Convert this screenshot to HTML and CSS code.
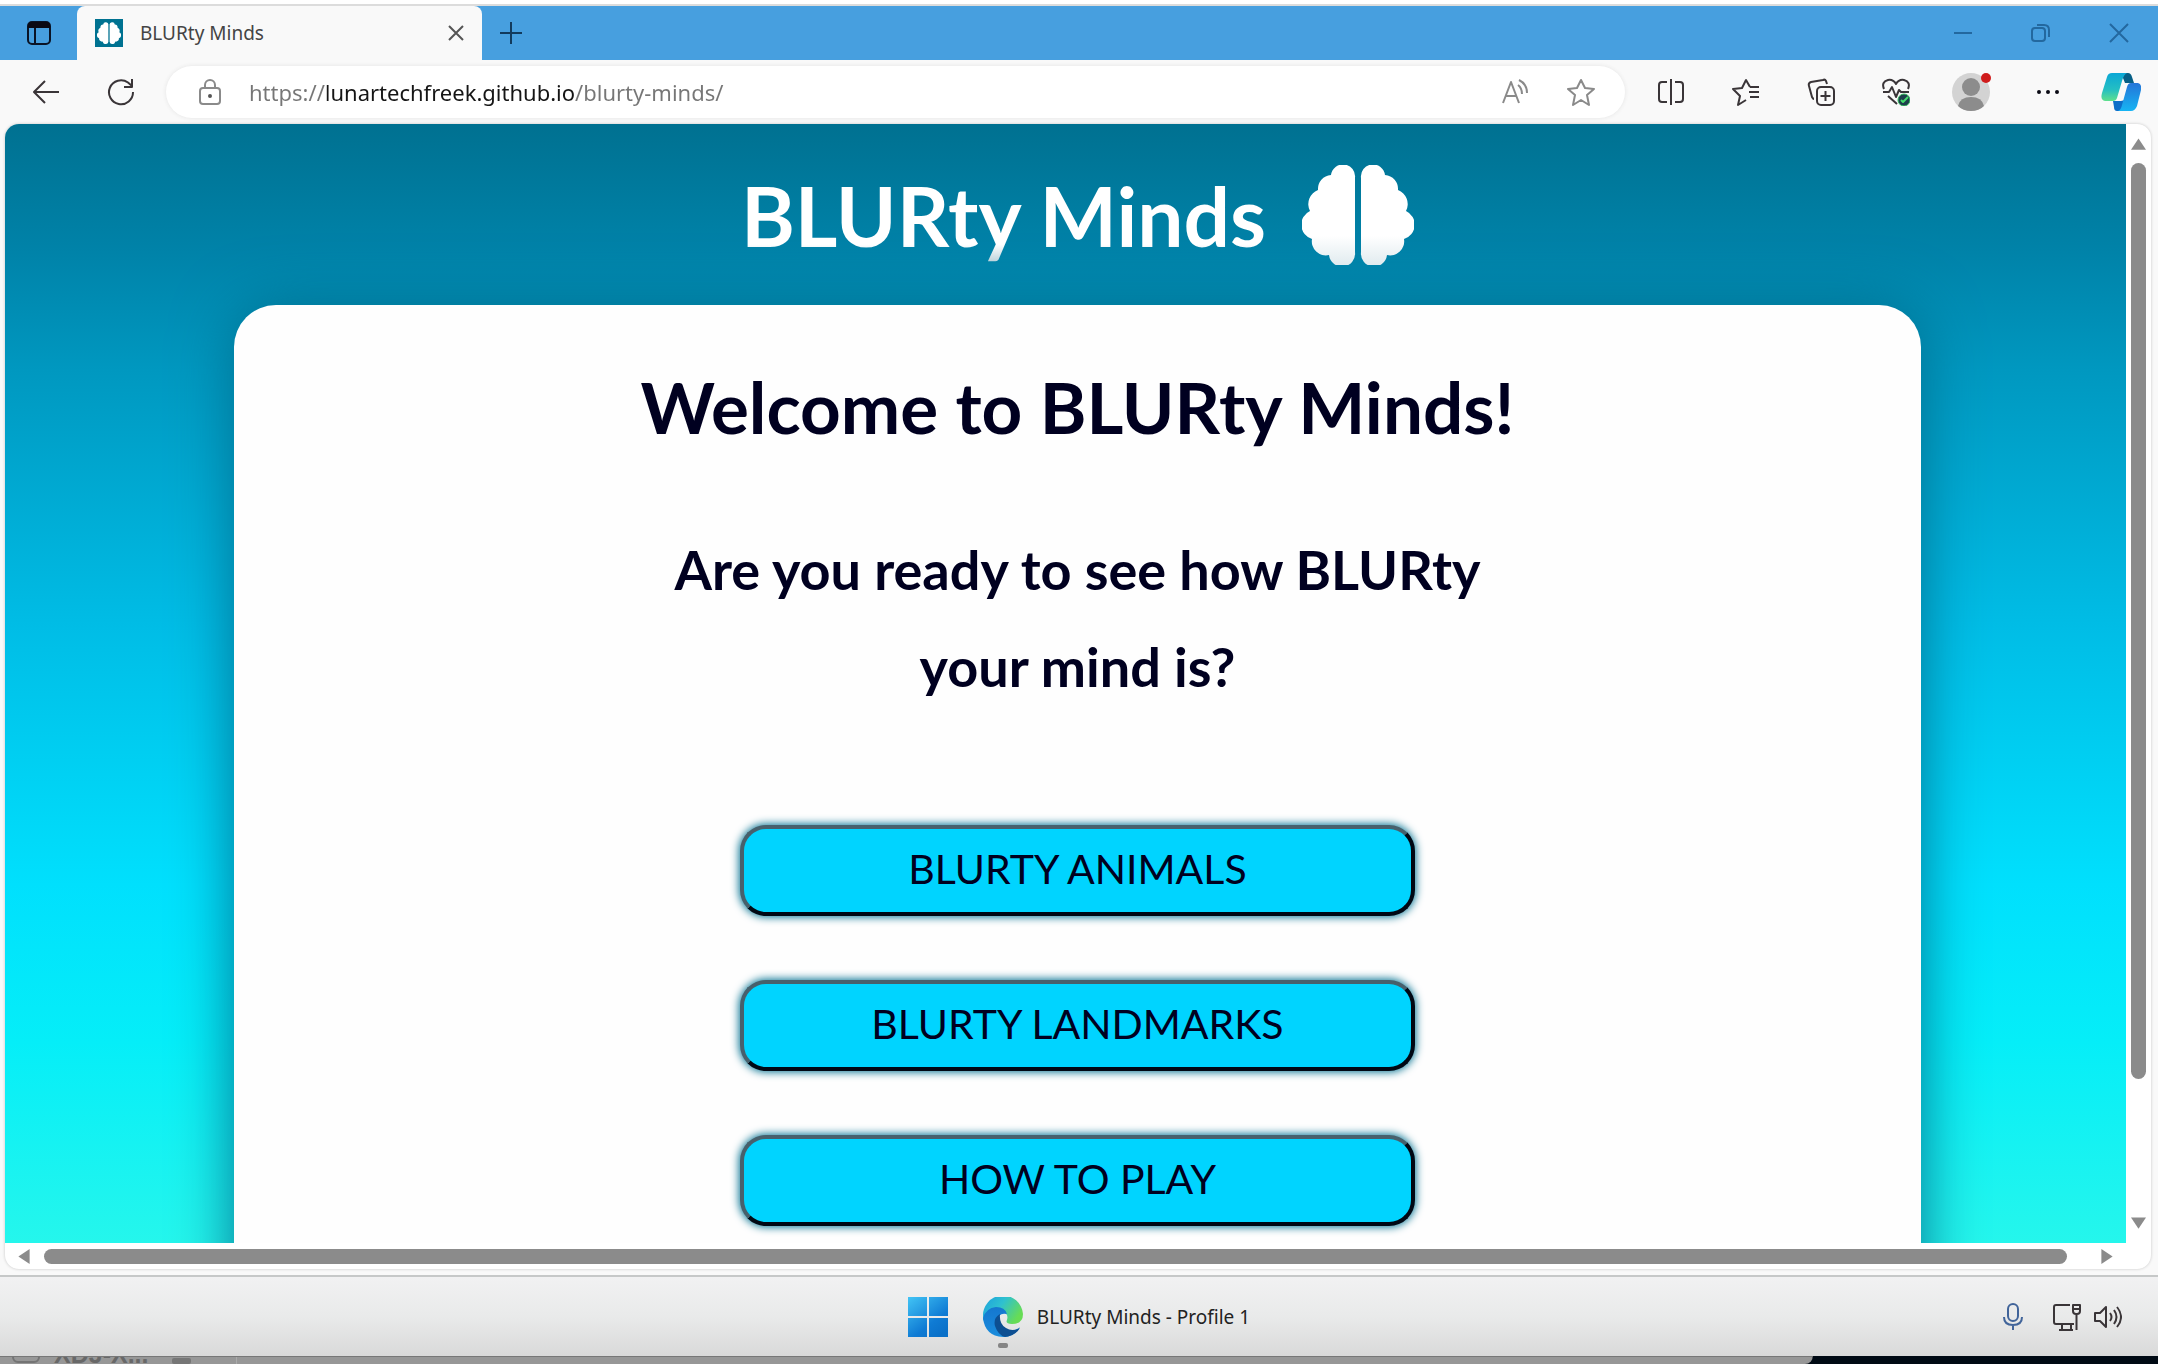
FILE: index.html
```
<!DOCTYPE html>
<html lang="en">
<head>
<meta charset="utf-8">
<title>BLURty Minds</title>
<link rel="stylesheet" href="styles.css">
</head>
<body>
<svg class="defs" aria-hidden="true">
  <defs>
    <linearGradient id="brain-fill" x1="0" y1="0" x2="0" y2="1"><stop offset=".7" stop-color="#fff"/><stop offset="1" stop-color="#dfeaee"/></linearGradient>
    <path id="lobe" d="M53 13A12 12 0 0 0 29 10A14 14 0 0 0 16 25A15 15 0 0 0 8 46A15 15 0 0 0 10 74A14 14 0 0 0 27 90A13 13 0 0 0 53 87Z"/>
    <symbol id="brain" viewBox="0 0 112 100"><use href="#lobe"/><use href="#lobe" transform="matrix(-1 0 0 1 112 0)"/></symbol>
  </defs>
</svg>

<div class="top-edge"></div>
<header class="title-bar">
  <button class="workspace" aria-label="Tab actions">
    <svg class="icon" viewBox="0 0 28 28"><rect x="3" y="3" width="22" height="22" rx="4"/><path class="solid" d="M4 8V7q0-3 3-3h14q3 0 3 3v1z"/><path d="M10 9v16"/></svg>
  </button>
  <div class="tab">
    <svg class="favicon" viewBox="0 0 28 28"><rect width="28" height="28" fill="#007291"/><use href="#brain" x="2" y="3" width="24" height="22" fill="#fff"/></svg>
    <span class="tab-title">BLURty Minds</span>
    <button aria-label="Close tab"><svg class="icon" viewBox="0 0 28 28"><path d="M7 7l14 14M21 7L7 21"/></svg></button>
  </div>
  <button class="new-tab" aria-label="New tab"><svg class="icon" viewBox="0 0 28 28"><path d="M14 3v22M3 14h22"/></svg></button>
  <div class="window-controls">
    <button aria-label="Minimize"><svg class="icon" viewBox="0 0 28 28"><path d="M5 14h18"/></svg></button>
    <button aria-label="Restore"><svg class="icon" viewBox="0 0 28 28"><rect x="5" y="9" width="13" height="13" rx="3"/><path d="M10 6h7q5 0 5 5v7"/></svg></button>
    <button aria-label="Close"><svg class="icon" viewBox="0 0 28 28"><path d="M5 5l18 18M23 5L5 23"/></svg></button>
  </div>
</header>

<nav class="toolbar" aria-label="Browser toolbar">
  <button aria-label="Back"><svg class="icon" viewBox="0 0 28 28"><path d="M27 14H2M13 3L2 14l11 11"/></svg></button>
  <button aria-label="Refresh"><svg class="icon" viewBox="0 0 28 28"><path d="M26 14A12 12 0 1 1 21 4.500L25 8M25 1v8h-8"/></svg></button>
  <div class="address">
    <svg class="icon muted" viewBox="0 0 28 28"><rect x="4" y="10" width="20" height="16" rx="3"/><path d="M9 10V7a5 5 0 0 1 10 0v3"/><circle class="solid" cx="14" cy="18" r="1"/></svg>
    <input type="text" aria-label="Address" value="https://lunartechfreek.github.io/blurty-minds/">
    <button aria-label="Read aloud"><svg class="icon muted" viewBox="0 0 28 28"><path d="M2 25L10 4l8 21M5 18h10M17 7q4 3 4 9M18 2q8 4 8 13"/></svg></button>
    <button aria-label="Add to favorites"><svg class="icon muted" viewBox="0 0 28 28"><path d="M14 2l4 8 9 1-7 6 2 10-8-5-8 5 2-10-7-6 9-1z"/></svg></button>
  </div>
  <button aria-label="Split screen"><svg class="icon" viewBox="0 0 28 28"><path d="M14 1v26M10 4H5q-3 0-3 3v14q0 3 3 3h5M18 4h5q3 0 3 3v14q0 3-3 3h-5"/></svg></button>
  <button aria-label="Favorites"><svg class="icon" viewBox="0 0 28 28"><path d="M18 9L14 2l-4 8-9 1 7 7-2 9 8-5M18 9h9M17 14h10M18 19h9"/></svg></button>
  <button aria-label="Collections"><svg class="icon" viewBox="0 0 28 28"><rect x="10" y="9" width="17" height="18" rx="4"/><path d="M18.500 13v10M13.500 18h10M20 6l-1-3q-1-2-3-1L4 4Q1 5 2 8l3 11q1 2 2 2"/></svg></button>
  <button aria-label="Browser essentials"><svg class="icon" viewBox="0 0 28 28"><path d="M2 11Q-1 4 6 2q5-1 8 4 3-5 8-4 7 2 4 9M1 14h6l3-5 4 10 3-7 2 2h8M6 18l9 8"/><circle cx="22" cy="22" r="6" fill="#1d3f4b" stroke="#2fb95a" stroke-width="1"/><path d="M19 22l2 2 5-5" stroke="#46dc6c"/></svg></button>
  <button aria-label="Profile"><svg class="avatar" viewBox="0 0 40 40"><circle cx="20" cy="20" r="19" fill="#d3d3d3"/><circle cx="20" cy="15" r="9" fill="#8c8c8c"/><path d="M7 34q2-9 13-9t13 9q-5 5-13 5T7 34z" fill="#8c8c8c"/><circle cx="35" cy="6" r="5" fill="#cf1c1c"/></svg></button>
  <button aria-label="Settings and more"><svg class="icon" viewBox="0 0 28 28"><g class="solid"><circle cx="7" cy="14" r="1"/><circle cx="16" cy="14" r="1"/><circle cx="25" cy="14" r="1"/></g></svg></button>
  <button aria-label="Copilot"><svg class="avatar" viewBox="0 0 40 40">
    <defs><linearGradient id="cp-a" x1="0" y1="0" x2="0" y2="1"><stop offset="0" stop-color="#0ba7d6"/><stop offset=".6" stop-color="#25bfc2"/><stop offset="1" stop-color="#5fe08d"/></linearGradient><linearGradient id="cp-b" x1="0" y1="0" x2="0" y2="1"><stop offset="0" stop-color="#2575d8"/><stop offset="1" stop-color="#16b4f3"/></linearGradient></defs>
    <path d="M20 1h7q3 0 4 4l2 6h-9z" fill="#075f86"/>
    <path d="M11 1h15q-3 1-5 8l-5 17q-1 3-4 3H4q-5-1-3-8L6 5q1-4 5-4z" fill="url(#cp-a)"/>
    <path d="M12 29h8l4-1-3 11h-5q-3 0-3-4z" fill="#0d6ec9"/>
    <path d="M30 11h7q4 1 3 7l-4 16q-2 5-6 5H17q3-1 4-6l5-18q1-4 4-4z" fill="url(#cp-b)"/>
  </svg></button>
</nav>

<div class="frame">
  <div class="viewport">
    <div class="page">
      <div class="brand">
        <h1>BLURty Minds</h1>
        <svg class="brand-brain" viewBox="0 0 112 100" fill="url(#brain-fill)"><use href="#lobe"/><use href="#lobe" transform="matrix(-1 0 0 1 112 0)"/></svg>
      </div>
      <main class="card">
        <h2>Welcome to BLURty Minds!</h2>
        <p>Are you ready to see how BLURty your mind is?</p>
        <div class="menu">
          <button>BLURTY ANIMALS</button>
          <button>BLURTY LANDMARKS</button>
          <button>HOW TO PLAY</button>
        </div>
      </main>
    </div>
  </div>
  <div class="scroll scroll-v">
    <svg viewBox="0 0 16 12"><path d="M8 0l8 12H0z"/></svg>
    <div class="track"><div class="thumb"></div></div>
    <svg viewBox="0 0 16 12"><path d="M0 0h16L8 12z"/></svg>
  </div>
  <div class="scroll scroll-h">
    <svg viewBox="0 0 12 16"><path d="M12 0v16L0 8z"/></svg>
    <div class="track"><div class="thumb"></div></div>
    <svg viewBox="0 0 12 16"><path d="M0 0l12 8L0 16z"/></svg>
  </div>
</div>

<footer class="taskbar">
  <div class="apps">
    <button aria-label="Start"><svg class="app-icon" viewBox="0 0 40 40"><defs><linearGradient id="win" gradientUnits="userSpaceOnUse" x1="0" y1="0" x2="30" y2="40"><stop offset="0" stop-color="#42c4f5"/><stop offset=".7" stop-color="#0f7bd4"/><stop offset="1" stop-color="#0a70c8"/></linearGradient></defs><path d="M0 0h19v19H0zM21 0h19v19H21zM0 21h19v19H0zM21 21h19v19H21z" fill="url(#win)"/></svg></button>
    <button class="running">
      <span class="edge">
        <svg class="app-icon" viewBox="0 0 40 40"><defs><linearGradient id="ed-a" x1="0" y1="0" x2="1" y2=".5"><stop offset="0" stop-color="#1b9fe0"/><stop offset=".5" stop-color="#2fc1cf"/><stop offset="1" stop-color="#67dc55"/></linearGradient><linearGradient id="ed-b" x1="0" y1="0" x2="0" y2="1"><stop offset="0" stop-color="#1577cf"/><stop offset="1" stop-color="#1a8ddd"/></linearGradient></defs>
          <path d="M0 20A20 20 0 0 1 40 17Q40 27 29 27q-7 0-5-4 2-7-5-8Q6 14 0 24z" fill="url(#ed-a)"/>
          <path d="M0 21Q3 11 13 10q9 0 11 7-9-2-9 7 0 10 12 10 5 0 10-4-6 10-17 10Q2 39 0 21z" fill="url(#ed-b)"/>
          <path d="M17 17q-7 4-5 12 3 9 10 11 10-1 15-9-8 4-14 0-7-4-6-14z" fill="#0d4f92"/></svg>
        <span class="indicator"></span>
      </span>
      BLURty Minds - Profile 1
    </button>
  </div>
  <div class="tray">
    <svg class="icon mic" viewBox="0 0 28 28"><rect x="9" y="1" width="10" height="17" rx="5"/><path d="M5 14q0 8 9 8t9-8M14 22v5"/></svg>
    <svg class="icon" viewBox="0 0 28 28"><path d="M17 2H3q-2 0-2 2v15q0 2 2 2h18M9 21v5M18 21v5M6 27h14M20 2h7v6q0 3-3 3h-1q-3 0-3-3zM20 6h7M23.500 11v16"/></svg>
    <svg class="icon" viewBox="0 0 28 28"><path d="M1 10h5l6-6v20l-6-6H1zM16 10q3 4 0 8M20 7q5 7 0 14M23 4q8 10 0 20"/></svg>
  </div>
</footer>
<div class="desktop">
  <div class="desktop-window">
    <div class="sidebar">
      <svg viewBox="0 0 28 20"><rect x="1" y="2" width="26" height="16" rx="5"/></svg>
      <span>XDJ-X...</span>
      <i></i>
    </div>
  </div>
</div>
</body>
</html>
```
FILE: styles.css
```
* { box-sizing: border-box; }

body {
  margin: 0;
  height: 100vh;
  display: flex;
  flex-direction: column;
  overflow: hidden;
  background: #f9f9f9;
  color: #222;
  font: 19px/28px "Noto Sans", sans-serif;
}

button {
  display: flex;
  align-items: center;
  justify-content: center;
  padding: 0;
  border: 0;
  background: none;
  color: inherit;
  font: inherit;
}

.defs { position: absolute; width: 0; height: 0; }

.icon {
  display: block;
  width: 28px;
  height: 28px;
  flex: none;
  fill: none;
  stroke: #3a3538;
  stroke-width: 2;
  stroke-linejoin: round;
}
.icon .solid { fill: #0a0a14; stroke: #0a0a14; }
.icon.muted { stroke: #8a8a8a; }
.icon.muted .solid { fill: #555; stroke: #555; }

/* Title bar */
.top-edge {
  flex: none;
  height: 6px;
  background: #fff;
  border-bottom: 2px solid #dcdcdc;
}
.title-bar {
  flex: none;
  height: 54px;
  display: flex;
  background: #479fdf;
}
.workspace { width: 77px; }
.workspace .icon { stroke: #0a1426; }
.tab {
  width: 405px;
  display: flex;
  align-items: center;
  padding: 0 12px 0 18px;
  background: #f9f9f9;
  border-radius: 8px 8px 0 0;
}
.favicon { width: 28px; height: 28px; margin-right: 17px; }
.tab-title { flex: 1; color: #444; }
.tab .icon { stroke: #555; }
.new-tab { width: 58px; }
.new-tab .icon { stroke: #123a5c; }
.window-controls { display: flex; margin-left: auto; }
.window-controls button { width: 78px; }
.window-controls .icon { stroke: #23689f; }

/* Toolbar */
.toolbar {
  flex: none;
  height: 64px;
  display: flex;
  align-items: center;
  padding-left: 8px;
}
.toolbar > button { width: 75px; height: 52px; flex: none; }
.avatar { width: 40px; height: 40px; }
.address {
  flex: 1;
  height: 52px;
  margin: 0 8px;
  padding: 0 30px;
  display: flex;
  align-items: center;
  background: #fff;
  border-radius: 26px;
  box-shadow: 0 0 4px #e4e4e4;
}
.address input {
  flex: 1;
  min-width: 0;
  margin-left: 25px;
  padding: 0;
  border: 0;
  font: 22px/32px "Noto Sans", sans-serif;
  color: transparent;
  background: linear-gradient(90deg, #767676 78px, #151515 78px 325px, #767676 325px);
  background-clip: text;
  -webkit-background-clip: text;
}
.address button { margin-left: 38px; }

/* Web view */
.frame {
  flex: 1;
  min-height: 0;
  margin: 0 7px 6px 5px;
  display: grid;
  grid-template: minmax(0, 1fr) 26px / minmax(0, 1fr) 25px;
  overflow: hidden;
  background: #fff;
  border-radius: 14px;
  box-shadow: 0 0 3px #c4c4c4;
}
.viewport {
  overflow: hidden;
  background: linear-gradient(#007191, #0082a8 11%, #0098c0 22%, #00bde6 45%, #00e0fd 68%, #05eef8 82%, #25f6ec);
}
.page { width: calc(100% + 24px); }
.brand {
  height: 181px;
  display: flex;
  align-items: center;
  justify-content: center;
  gap: 36px;
}
.brand h1 {
  margin: 0;
  font: 700 82px/98px Lato, sans-serif;
  color: transparent;
  background: linear-gradient(#fff 80%, #b4cdd6);
  background-clip: text;
  -webkit-background-clip: text;
}
.brand-brain { width: 112px; height: 100px; }

.card {
  min-height: 1200px;
  margin: 0 229px;
  padding: 60px;
  display: flex;
  flex-direction: column;
  align-items: center;
  background: #fefefe;
  border-radius: 42px;
  box-shadow: 0 0 60px #007191;
  color: #000020;
  font-family: Lato, sans-serif;
}
.card h2 {
  margin: 0 0 72px;
  font-size: 71px;
  line-height: 84px;
}
.card p {
  max-width: 860px;
  margin: 0 0 110px;
  font-size: 54px;
  font-weight: 700;
  line-height: 97px;
  text-align: center;
}
.menu {
  width: 675px;
  display: grid;
  gap: 64px;
}
.menu button {
  height: 91px;
  padding-bottom: 3px;
  border: 4px solid;
  border-color: #47606c #000814 #000814 #47606c;
  border-radius: 26px;
  background: #00d4ff;
  box-shadow: 0 0 8px 1px #007191;
  font-size: 41px;
  line-height: 48px;
}

/* Scrollbars */
.scroll { display: flex; align-items: center; }
.scroll svg { flex: none; fill: #8b8b8b; }
.track { flex: 1; display: flex; }
.thumb { background: #8b8b8b; border-radius: 8px; }
.scroll-v { flex-direction: column; padding: 14px 0; }
.scroll-v svg { width: 15px; height: 12px; }
.scroll-v .track { flex-direction: column; margin: 13px 0; }
.scroll-v .thumb { width: 15px; height: 88%; }
.scroll-h { padding: 0 13px; }
.scroll-h svg { width: 12px; height: 15px; }
.scroll-h .track { margin: 0 14px; }
.scroll-h .thumb { width: 99%; height: 15px; }

/* Taskbar */
.taskbar {
  flex: none;
  height: 81px;
  display: grid;
  grid-template-columns: 1fr auto 1fr;
  align-items: center;
  border-top: 2px solid #c6c8c8;
  background: linear-gradient(#f1f1f2, #e9eaea 50%, #d9d9d9);
}
.apps { grid-column: 2; display: flex; gap: 35px; }
.app-icon { display: block; width: 40px; height: 40px; }
.running { gap: 14px; }
.edge { position: relative; }
.indicator {
  position: absolute;
  left: 15px;
  bottom: -11px;
  width: 10px;
  height: 5px;
  border-radius: 2px;
  background: #858585;
}
.tray {
  display: flex;
  justify-content: flex-end;
  gap: 13px;
  padding-right: 36px;
}
.tray .mic { margin-right: 13px; stroke: #41649a; }

/* Desktop behind the session window */
.desktop {
  flex: none;
  height: 8px;
  overflow: hidden;
  background: #000a14;
}
.desktop-window {
  width: 84%;
  height: 8px;
  display: flex;
  background: #979797;
  border-top: 1px solid #777;
  border-bottom-right-radius: 8px;
}
.sidebar {
  width: 237px;
  height: 7px;
  display: flex;
  align-items: flex-end;
  gap: 14px;
  padding-left: 12px;
  overflow: hidden;
  border-right: 1px solid #aaa;
  font: 700 25px/20px "Liberation Sans", sans-serif;
  color: #686868;
}
.sidebar svg { width: 28px; height: 20px; flex: none; fill: none; stroke: #747474; stroke-width: 2; }
.sidebar i { width: 19px; height: 6px; margin-left: 10px; border-radius: 2px; background: #767676; }
```
